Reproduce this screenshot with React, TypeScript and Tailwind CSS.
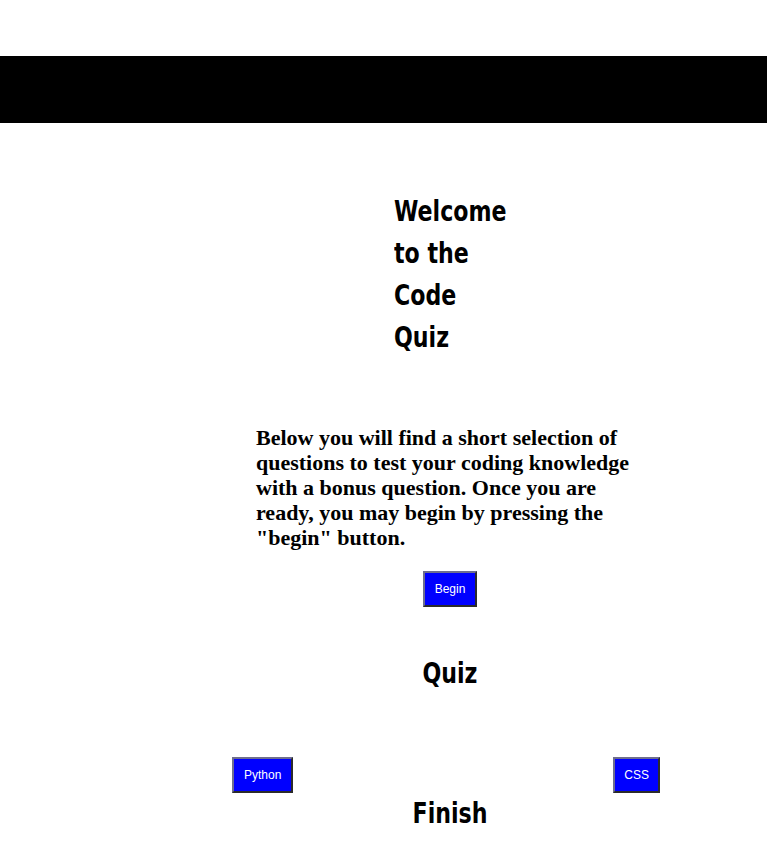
import React from "react";

const heading = "font-bold text-[28px] leading-[42px] text-black scale-x-[0.79]";
const headFont = { fontFamily: '"DejaVu Sans", sans-serif' };
const btn =
  "bg-[#0000ff] text-white text-[12px] leading-[14px] py-[9px] border-2 border-solid border-t-[#6e6e8e] border-l-[#6e6e8e] border-b-[#2b2b2b] border-r-[#2b2b2b]";
const btnFont = { fontFamily: '"Liberation Sans", Arial, sans-serif' };

export default function App() {
  return (
    <div className="w-[767px] min-h-[858px] bg-white">
      <div className="h-[56px]" />
      <div className="h-[67px] bg-black" />
      <div className="pl-[256px] w-[644px] flex flex-col">
        <h1 className={`${heading} origin-left mt-[68px] ml-[138px] w-[150px]`} style={headFont}>
          Welcome
          <br />
          to the
          <br />
          Code
          <br />
          Quiz
        </h1>
        <p
          className="mt-[66px] w-[388px] text-[22px] leading-[25px] font-bold text-black"
          style={{ fontFamily: '"Liberation Serif", "Times New Roman", serif' }}
        >
          Below you will find a short selection of questions to test your coding knowledge with a bonus question. Once you are ready, you may begin by pressing the "begin" button.
        </p>
        <div className="mt-[21px] w-[388px] flex justify-center">
          <button className={`${btn} px-[10px]`} style={btnFont}>Begin</button>
        </div>
        <h2 className={`${heading} origin-center mt-[46px] w-[388px] text-center`} style={headFont}>
          Quiz
        </h2>
      </div>
      <div className="mt-[62px] ml-[232px] w-[428px] flex justify-between">
        <button className={`${btn} px-[10px]`} style={btnFont}>Python</button>
        <button className={`${btn} px-[9px]`} style={btnFont}>CSS</button>
      </div>
      <div className="pl-[256px] w-[644px]">
        <h2 className={`${heading} origin-center w-[388px] text-center`} style={headFont}>
          Finish
        </h2>
      </div>
    </div>
  );
}
